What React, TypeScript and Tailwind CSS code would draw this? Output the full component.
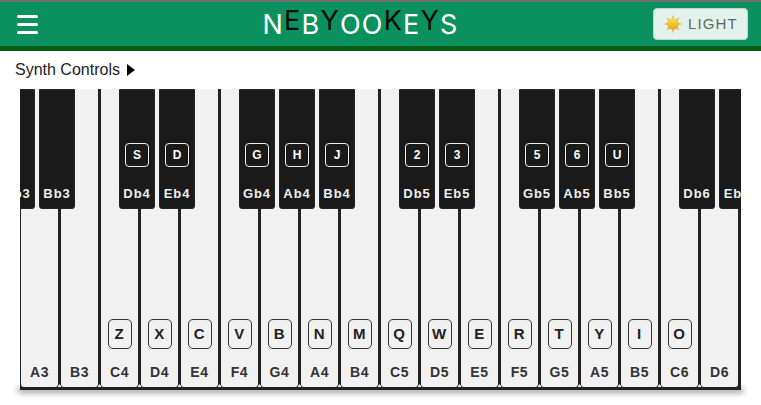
import React from "react";

const whites: [string, string?][] = [
  ["A3"], ["B3"], ["C4", "Z"], ["D4", "X"], ["E4", "C"], ["F4", "V"], ["G4", "B"], ["A4", "N"], ["B4", "M"],
  ["C5", "Q"], ["D5", "W"], ["E5", "E"], ["F5", "R"], ["G5", "T"], ["A5", "Y"], ["B5", "I"], ["C6", "O"], ["D6"],
];

const blacks: [number, string, string?][] = [
  [-1, "Ab3"], [0, "Bb3"], [2, "Db4", "S"], [3, "Eb4", "D"], [5, "Gb4", "G"], [6, "Ab4", "H"], [7, "Bb4", "J"],
  [9, "Db5", "2"], [10, "Eb5", "3"], [12, "Gb5", "5"], [13, "Ab5", "6"], [14, "Bb5", "U"], [16, "Db6"], [17, "Eb6"],
];

const title: [string, boolean][] = [
  ["N", false], ["E", true], ["B", false], ["Y", true], ["O", false], ["O", false],
  ["K", true], ["E", false], ["Y", true], ["S", false],
];

function Sun() {
  const rays = [0, 45, 90, 135, 180, 225, 270, 315];
  return (
    <svg width="20" height="20" viewBox="0 0 20 20" aria-hidden="true">
      <defs>
        <linearGradient id="sunFill" x1="0" y1="0" x2="0" y2="1">
          <stop offset="0" stopColor="#f7e04a" />
          <stop offset="1" stopColor="#eda51c" />
        </linearGradient>
      </defs>
      {rays.map((r) => (
        <polygon key={r} points="8.6,5 11.4,5 10,0.6" fill="#e8b565" transform={`rotate(${r} 10 10)`} />
      ))}
      <circle cx="10" cy="10" r="5.8" fill="url(#sunFill)" />
    </svg>
  );
}

export default function App() {
  return (
    <div className="w-[761px] h-[405px] overflow-hidden bg-white font-['Liberation_Sans',Arial,sans-serif]">
      <header className="h-[51px] border-t-[2px] border-t-[#6e6e6e] border-b-[5px] border-b-[#0a5c14] bg-[#0b9160] flex items-center justify-between pl-[17px] pr-[13px]">
        <div className="flex flex-col gap-[5px] w-[21px]">
          <span className="h-[3px] rounded-sm bg-white" />
          <span className="h-[3px] rounded-sm bg-white" />
          <span className="h-[3px] rounded-sm bg-white" />
        </div>
        <h1 className="flex items-baseline ml-[30px] text-[27px] leading-none font-normal tracking-[1.2px] font-['Inter','Liberation_Sans',sans-serif] font-light">
          {title.map(([c, up], i) => (
            <span key={i} className={up ? "text-[#0a0a0a] relative -top-[4px]" : "text-white"}>
              {c}
            </span>
          ))}
        </h1>
        <button className="w-[95px] h-[32px] rounded-[4px] border border-[#c5d5d0] bg-[#e4f2ee] flex items-center pl-[9px] gap-[5px] text-[15px] tracking-[1.1px] text-[#5d6b67]">
          <Sun />
          <span>LIGHT</span>
        </button>
      </header>

      <div className="h-[38px] pl-[15px] flex items-center gap-[7px] text-[16px] text-[#222]">
        <span>Synth Controls</span>
        <span className="w-0 h-0 border-y-[6px] border-y-transparent border-l-[8px] border-l-black" />
      </div>

      <div className="relative ml-[20px] w-[721px] h-[301px] overflow-hidden bg-[#222]">
        <div className="flex gap-[3px] pl-[1px] h-[298px]">
          {whites.map(([note, hint], i) => (
            <div
              key={note}
              className="relative w-[37px] shrink-0 rounded-b-[3px] bg-[#f1f1f1] flex flex-col items-center justify-end pb-[7px] text-[14px] font-bold tracking-[0.6px] text-[#333]"
            >
              {hint && (
                <span className="mb-[15px] w-[24px] h-[30px] rounded-[5px] border border-[#333] flex items-center justify-center text-[#222] text-[15px]">
                  {hint}
                </span>
              )}
              <span className="leading-[16px]">{note}</span>
              {i < whites.length - 1 && (
                <span className="absolute bottom-0 -right-[3.5px] w-[4px] h-[3px] bg-white [clip-path:polygon(50%_0,100%_100%,0_100%)]" />
              )}
            </div>
          ))}
        </div>
        {blacks.map(([slot, note, hint]) => (
          <div
            key={note}
            className="absolute top-0 w-[36px] h-[120px] rounded-b-[3px] bg-[#1a1a1a] border border-[#232323] flex flex-col items-center justify-end pb-[7px] text-[13px] font-bold tracking-[0.9px] text-[#eee]"
            style={{ left: 19 + slot * 40 }}
          >
            {hint && (
              <span className="mb-[19px] w-[24px] h-[24px] rounded-[4px] border border-[#eee] flex items-center justify-center text-[12px] tracking-normal text-white">
                {hint}
              </span>
            )}
            <span className="leading-[15px]">{note}</span>
          </div>
        ))}
      </div>
      <div className="ml-[20px] w-[721px] h-0 shadow-[0_0_6px_2px_rgba(0,0,0,0.55)]" />
    </div>
  );
}
